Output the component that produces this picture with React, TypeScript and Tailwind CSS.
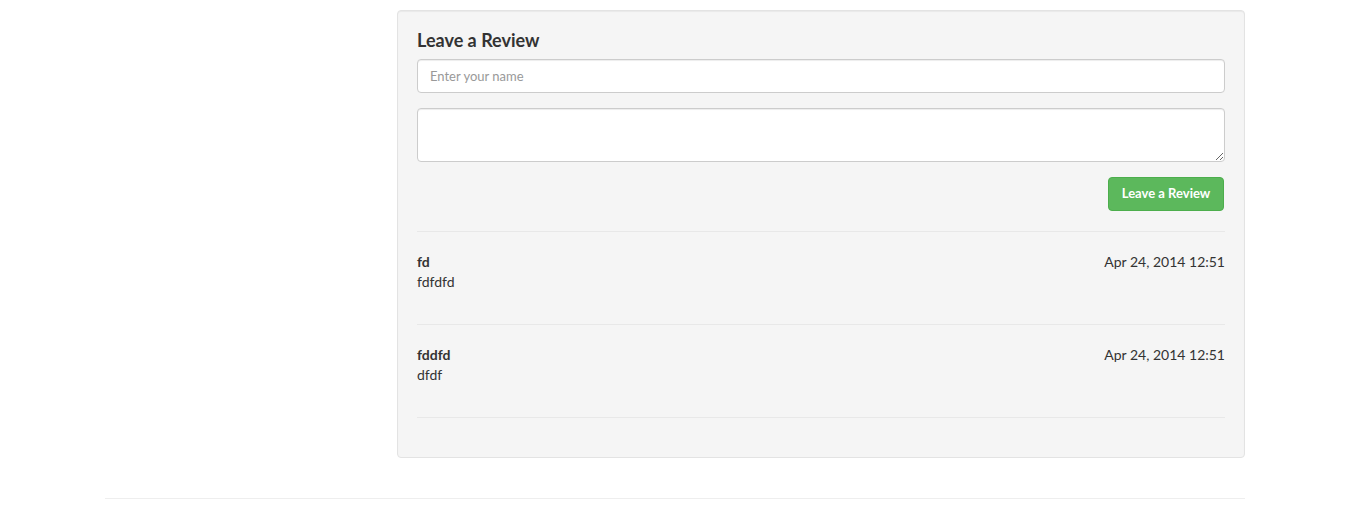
const reviews = [
  { name: 'fd', body: 'fdfdfd', date: 'Apr 24, 2014 12:51' },
  { name: 'fddfd', body: 'dfdf', date: 'Apr 24, 2014 12:51' },
];

export default function App() {
  return (
    <div className="min-h-[513px] bg-white text-[#333] font-['Lato',sans-serif] text-[14px]">
      <div className="ml-[105px] w-[1140px] pt-[10px]">
        <div className="flex">
          <div className="w-[292px] shrink-0" />
          <div className="flex-1 rounded-[4px] border border-[#e3e3e3] bg-[#f5f5f5] p-[19px] shadow-[inset_0_1px_1px_rgba(0,0,0,0.05)]">
            <h4 className="mb-[9px] text-[18px] font-bold leading-[20px]">Leave a Review</h4>
            <input
              className="mb-[15px] block h-[34px] w-full rounded-[4px] border border-[#ccc] bg-white px-3 text-[13px] placeholder:text-[#999] shadow-[inset_0_1px_1px_rgba(0,0,0,0.075)] outline-none"
              placeholder="Enter your name"
            />
            <textarea className="mb-[15px] block h-[54px] w-full rounded-[4px] border border-[#ccc] bg-white px-3 py-1.5 text-[13px] shadow-[inset_0_1px_1px_rgba(0,0,0,0.075)] outline-none" />
            <div className="flex justify-end pr-px">
              <button className="h-[34px] w-[116px] rounded-[4px] border border-[#4cae4c] bg-[#5cb85c] text-[13px] font-bold text-white">
                Leave a Review
              </button>
            </div>
            <hr className="mt-[20px] mb-[20px] border-t border-[#e8e8e8]" />
            {reviews.map((r, i) => (
              <div key={i}>
                <div className="flex justify-between leading-[20px]">
                  <span className="font-bold">{r.name}</span>
                  <span>{r.date}</span>
                </div>
                <p className="leading-[20px]">{r.body}</p>
                <hr
                  className={
                    i === reviews.length - 1
                      ? 'mt-[32px] mb-[20px] border-t border-[#e8e8e8]'
                      : 'mt-[32px] mb-[20px] border-t border-[#e8e8e8]'
                  }
                />
              </div>
            ))}
          </div>
        </div>
        <hr className="mt-[40px] border-t border-[#eee]" />
      </div>
    </div>
  );
}
